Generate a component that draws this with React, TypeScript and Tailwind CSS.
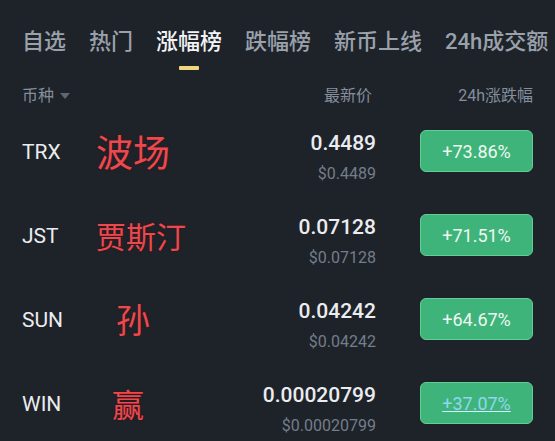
import React from "react";

const rows = [
  { sym: "TRX", name: "波场", nameCls: "text-[37px] ml-0", price: "0.4489", usd: "$0.4489", pct: "+73.86%" },
  { sym: "JST", name: "贾斯汀", nameCls: "text-[30px] ml-0", price: "0.07128", usd: "$0.07128", pct: "+71.51%" },
  { sym: "SUN", name: "孙", nameCls: "text-[34px] ml-[20px]", price: "0.04242", usd: "$0.04242", pct: "+64.67%" },
  { sym: "WIN", name: "赢", nameCls: "text-[32px] ml-[16px]", price: "0.00020799", usd: "$0.00020799", pct: "+37.07%" },
];

const tabs = ["自选", "热门", "涨幅榜", "跌幅榜", "新币上线", "24h成交额"];

export default function App() {
  return (
    <div
      className="w-[555px] h-[441px] overflow-hidden bg-[#1e2329] text-[#eaecef]"
      style={{ fontFamily: 'Roboto, "Noto Sans CJK SC", sans-serif' }}
    >
      <div className="flex gap-[23px] px-[22px] pt-[29px] text-[22px] leading-[26px] font-medium">
        {tabs.map((t, i) => (
          <div key={t} className="flex flex-col items-center shrink-0">
            <span className={i === 2 ? "text-[#f2f3f5]" : "text-[#9aa1ab]"}>{t}</span>
            <div className={i === 2 ? "mt-[11px] h-[4px] w-[20px] rounded-[1px] bg-[#eed77f]" : "mt-[11px] h-[4px] w-[20px]"} />
          </div>
        ))}
      </div>

      <div className="mt-[11px] flex h-[30px] items-center px-[22px] text-[16px] text-[#848e9c]">
        <div className="flex w-[280px] items-center gap-[6px]">
          <span>币种</span>
          <svg width="10" height="6" viewBox="0 0 10 6">
            <path d="M0 0h10L5 6z" fill="#5e6673" />
          </svg>
        </div>
        <div className="w-[70px] text-right">最新价</div>
        <div className="flex-1 text-right">24h涨跌幅</div>
      </div>

      <div className="flex flex-col">
        {rows.map((r, i) => (
          <div key={r.sym} className="flex h-[84px] items-center px-[22px]">
            <div className="w-[74px] text-[21px] text-[#eaecef]">{r.sym}</div>
            <div className="flex-1">
              <span
                className={`${r.nameCls} leading-none text-[#ea4a4f] [text-shadow:0_0_2px_#4a0d10]`}
                style={{ fontFamily: '"Noto Sans CJK SC", sans-serif' }}
              >
                {r.name}
              </span>
            </div>
            <div className="flex flex-col items-end pt-[8px]">
              <div className="text-[21px] leading-[24px] font-medium text-[#eaecef]">{r.price}</div>
              <div className="mt-[10px] text-[16px] leading-[18px] text-[#757d8a]">{r.usd}</div>
            </div>
            <div className="ml-[44px] mb-[4px] flex h-[42px] w-[113px] items-center justify-center rounded-[6px] border border-[#5fcf95] bg-[#3fb47a]">
              {i === 3 ? (
                <span className="text-[18px] text-[#8fd7f0] underline decoration-[#d6f3ff]">{r.pct}</span>
              ) : (
                <span className="text-[18px] text-[#eef8f2]">{r.pct}</span>
              )}
            </div>
          </div>
        ))}
      </div>
    </div>
  );
}
